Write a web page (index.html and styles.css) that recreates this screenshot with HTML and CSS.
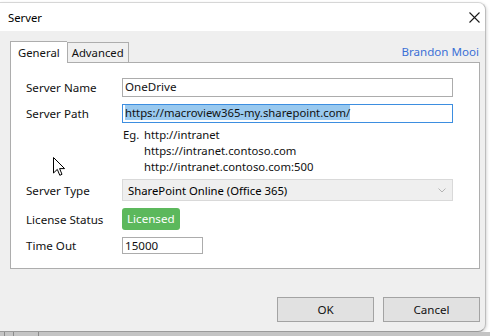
FILE: index.html
```html
<!DOCTYPE html>
<html lang="en">
<head>
<meta charset="UTF-8">
<title>Server</title>
<link rel="stylesheet" href="styles.css">
</head>
<body>
<div class="window">
    <div class="titlebar">
        <span class="title">Server</span>
        <svg class="close" width="11" height="11" viewBox="0 0 11 11">
            <path d="M0.5 0.5 L10.5 10.5 M10.5 0.5 L0.5 10.5" stroke="#1a1a1a" stroke-width="1.1" fill="none"/>
        </svg>
    </div>
    <div class="content">
        <div class="tab-row">
            <div class="tabs">
                <span class="tab active">General</span>
                <span class="tab">Advanced</span>
            </div>
            <a class="user-link">Brandon Mooi</a>
        </div>
        <div class="panel">
            <div class="row">
                <span class="label">Server Name</span>
                <div class="field wide">OneDrive</div>
            </div>
            <div class="row">
                <span class="label">Server Path</span>
                <div class="field wide focus"><span class="selected">https://macroview365-my.sharepoint.com/</span></div>
            </div>
            <div class="examples">
                <span class="eg">Eg.</span>
                <div class="eg-list">
                    <span>http://intranet</span>
                    <span>https://intranet.contoso.com</span>
                    <span>http://intranet.contoso.com:500</span>
                </div>
            </div>
            <div class="row tall">
                <span class="label">Server Type</span>
                <div class="select">
                    <span>SharePoint Online (Office 365)</span>
                    <svg width="8" height="5" viewBox="0 0 8 5"><path d="M0.5 0.5 L4 4 L7.5 0.5" stroke="#b4b4b4" fill="none"/></svg>
                </div>
            </div>
            <div class="row tall">
                <span class="label">License Status</span>
                <span class="badge">Licensed</span>
            </div>
            <div class="row short">
                <span class="label">Time Out</span>
                <div class="field small">15000</div>
            </div>
        </div>
        <div class="buttons">
            <button class="btn">OK</button>
            <button class="btn">Cancel</button>
        </div>
    </div>
    <svg class="cursor" width="13" height="20" viewBox="0 0 13 20">
        <path d="M0.5 0.5 L0.5 16 L4.3 12.4 L6.8 18.3 L9 17.3 L6.6 11.6 L11.6 11.6 Z" fill="#fff" stroke="#000" stroke-width="1" stroke-linejoin="miter"/>
    </svg>
</div>
<div class="backdrop">
    <span class="line l1"></span>
    <span class="line l2"></span>
    <span class="line l3"></span>
</div>
</body>
</html>
```

FILE: styles.css
```css
body {
    margin: 0;
    background-color: #ffffff;
    font-family: "Noto Sans", "Open Sans", sans-serif;
    font-size: 11.3px;
    color: #111;
    width: 490px;
    height: 336px;
    overflow: hidden;
}

.window {
    position: relative;
    width: 485px;
    margin-top: 2px;
    border-top: 1px solid #d6d6d6;
    border-right: 1px solid #bdbdbd;
    border-bottom: 1px solid #9a9a9a;
    border-radius: 0 8px 8px 0;
    background-color: #efefef;
    overflow: hidden;
    box-shadow: 1px 1px 3px rgba(0, 0, 0, 0.15);
}

.titlebar {
    height: 28px;
    background-color: #ffffff;
    display: flex;
    align-items: center;
    justify-content: space-between;
    padding: 0 5px 0 8px;
}

.title {
    color: #000;
}

.content {
    padding: 10px 5px 9px 10px;
}

.tab-row {
    display: flex;
    align-items: flex-end;
    justify-content: space-between;
    height: 21px;
}

.tabs {
    display: flex;
    align-items: flex-end;
}

.tab {
    border: 1px solid #adadad;
    border-bottom: none;
    background-color: #f0f0f0;
    height: 19px;
    line-height: 19px;
    padding: 0 4px;
}

.tab.active {
    background-color: #ffffff;
    height: 21px;
    line-height: 22px;
    padding: 0 7px 0 7px;
    margin-bottom: -1px;
    position: relative;
    z-index: 1;
    border-right: none;
}

.user-link {
    color: #3b6fd6;
    font-size: 11.6px;
    line-height: 20px;
    margin-right: 1px;
}

.panel {
    background-color: #ffffff;
    border: 1px solid #adadad;
    height: 190px;
    padding: 15px 0 0 15px;
}

.row {
    display: flex;
    align-items: center;
    height: 19px;
    margin-bottom: 7px;
}

.row.tall {
    height: 22px;
}

.row.short {
    height: 17px;
}

.label {
    width: 96px;
    flex-shrink: 0;
    font-size: 11.6px;
}

.field {
    box-sizing: border-box;
    height: 100%;
    border: 1px solid #acacac;
    background-color: #fff;
    padding: 0 2px;
    line-height: 16px;
    white-space: nowrap;
    overflow: hidden;
    font-size: 11.6px;
}

.field.wide {
    width: 331px;
}

.field.small {
    width: 81px;
}

.field.focus {
    border-color: #3d8ee0;
    font-size: 11.3px;
}

.selected {
    background-color: #99c9ef;
}

.examples {
    display: flex;
    margin: -3px 0 4px 97px;
    line-height: 16px;
}

.eg {
    width: 21px;
}

.eg-list {
    display: flex;
    flex-direction: column;
}

.select {
    box-sizing: border-box;
    width: 331px;
    height: 100%;
    border: 1px solid #d9d9d9;
    background-color: #efefef;
    display: flex;
    align-items: center;
    justify-content: space-between;
    padding: 0 6px 0 5px;
    color: #000;
}

.badge {
    background-color: #5cb85c;
    color: #ffffff;
    border-radius: 3px;
    height: 22px;
    line-height: 22px;
    padding: 0 5px;
    font-size: 11.6px;
}

.buttons {
    display: flex;
    justify-content: flex-end;
    gap: 9px;
    margin-top: 28px;
}

.btn {
    width: 97px;
    height: 25px;
    background-color: #e1e1e1;
    border: 1px solid #a3a3a3;
    font-family: "Noto Sans", "Open Sans", sans-serif;
    font-size: 11.6px;
    color: #111;
    padding: 0;
}

.cursor {
    position: absolute;
    left: 53px;
    top: 154px;
}

.backdrop {
    position: relative;
    height: 10px;
    background-color: #c4c4c4;
}

.line {
    position: absolute;
    top: 0;
    width: 1px;
    height: 10px;
    background-color: #8a8a8a;
}

.l1 { left: 4px; }
.l2 { left: 13px; }
.l3 { left: 38px; }
```
